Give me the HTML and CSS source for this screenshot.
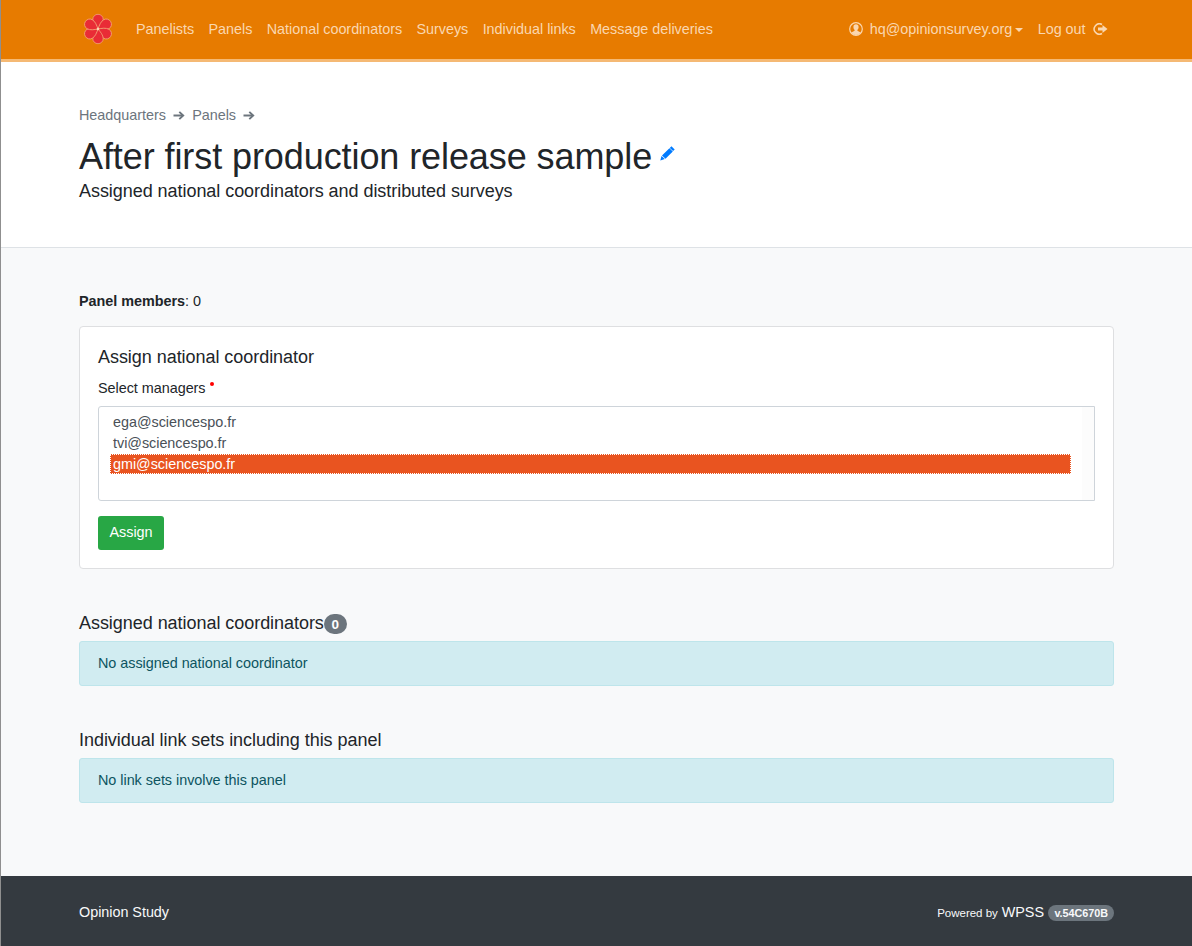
FILE: index.html
```html
<!DOCTYPE html>
<html lang="en">
<head>
<meta charset="utf-8">
<title>Opinion Study</title>
<link rel="stylesheet" href="styles.css">
</head>
<body>
<header class="topbar">
  <div class="container topbar-inner">
    <svg class="logo" width="30" height="32" viewBox="-15 -16 30 32" aria-hidden="true">
      <defs><path id="petal" d="M0 0C-2.500-3-5.200-6-5.200-9.700A5.200 5 0 0 1 5.200-9.700C5.200-6 2.500-3 0 0Z"/></defs>
      <g fill="#e92c36" stroke="#f3a477" stroke-width=".8">
        <use href="#petal"/><use href="#petal" transform="rotate(60)"/><use href="#petal" transform="rotate(120)"/><use href="#petal" transform="rotate(180)"/><use href="#petal" transform="rotate(240)"/><use href="#petal" transform="rotate(300)"/>
      </g>
      <circle r="1.300" fill="#fbd2b4"/>
    </svg>
    <nav class="nav">
      <a>Panelists</a><a>Panels</a><a>National coordinators</a><a>Surveys</a><a>Individual links</a><a>Message deliveries</a>
    </nav>
    <nav class="nav nav-user">
      <a class="user"><svg width="14" height="14" viewBox="0 0 14 14" aria-hidden="true"><circle cx="7" cy="7" r="6.300" fill="none" stroke="currentColor" stroke-width="1.200"/><path fill="currentColor" d="M7 2.300c1.700 0 2.600 1.100 2.600 2.700 0 1.200-.5 2.200-1.200 2.900v.9l3.300 1.600A5.800 5.800 0 0 1 7 13a5.800 5.800 0 0 1-4.700-2.600l3.300-1.600v-.9C4.900 7.200 4.400 6.200 4.400 5c0-1.600.9-2.700 2.600-2.700z"/></svg><span>hq@opinionsurvey.org</span><i class="caret"></i></a>
      <a class="logout"><span>Log out</span><svg width="15" height="12" viewBox="0 0 15 12" aria-hidden="true"><path d="M9 1.500A5.200 5.200 0 1 0 9 10.500" fill="none" stroke="currentColor" stroke-width="1.500"/><path fill="currentColor" d="M5 4.500h4.500V2L14.500 6l-5 4V7.500H5z"/></svg></a>
    </nav>
  </div>
</header>

<section class="hero">
  <div class="container">
    <div class="crumbs">
      <a>Headquarters</a><svg class="arrow" width="12" height="9" viewBox="0 0 12 9"><path d="M.5 4.500h9" fill="none" stroke="currentColor" stroke-width="2"/><path d="M6.300.9l3.900 3.600-3.900 3.600" fill="none" stroke="currentColor" stroke-width="1.900"/></svg><a>Panels</a><svg class="arrow" width="12" height="9" viewBox="0 0 12 9"><path d="M.5 4.500h9" fill="none" stroke="currentColor" stroke-width="2"/><path d="M6.300.9l3.900 3.600-3.900 3.600" fill="none" stroke="currentColor" stroke-width="1.900"/></svg>
    </div>
    <h1>After first production release sample<svg class="pencil" width="15" height="15" viewBox="0 0 15 15" aria-hidden="true"><path fill="#007bff" d="M11.400.3 14.700 3.400 13.100 5 9.800 1.900zM9.400 2.200l3.400 3.200-7.300 7.300-3.500-3.300zM1.500 10l3.300 3.100L.3 14.500z"/></svg></h1>
    <p class="subtitle">Assigned national coordinators and distributed surveys</p>
  </div>
</section>

<main class="main">
  <div class="container">
    <p class="members"><b>Panel members</b>: 0</p>
    <div class="card">
      <h5>Assign national coordinator</h5>
      <div class="label">Select managers <i class="required"></i></div>
      <div class="listbox">
        <div class="options">
          <div class="option">ega@sciencespo.fr</div>
          <div class="option">tvi@sciencespo.fr</div>
          <div class="option selected">gmi@sciencespo.fr</div>
        </div>
        <div class="track"></div>
      </div>
      <button class="btn">Assign</button>
    </div>
    <section class="block">
      <h5>Assigned national coordinators<span class="badge">0</span></h5>
      <div class="alert">No assigned national coordinator</div>
    </section>
    <section class="block">
      <h5>Individual link sets including this panel</h5>
      <div class="alert">No link sets involve this panel</div>
    </section>
  </div>
</main>

<footer class="footer">
  <div class="container footer-inner">
    <span>Opinion Study</span>
    <span class="powered"><small>Powered by</small> WPSS <span class="version">v.54C670B</span></span>
  </div>
</footer>
</body>
</html>
```

FILE: styles.css
```css
* { box-sizing: border-box; }
html { font-size: 14.4px; }
body {
  margin: 0;
  height: 946px;
  display: flex;
  flex-direction: column;
  border-left: 1px solid #8f8f8f;
  font-family: "Liberation Sans", Arial, sans-serif;
  font-size: 14.4px;
  line-height: 21.6px;
  letter-spacing: -.03px;
  color: #212529;
  background: #f8f9fa;
  overflow: hidden;
}
h1, h5, p { margin: 0; font-weight: 400; }
svg { flex: none; }
.container { width: 1035px; margin-left: 78px; }

.topbar { height: 62px; background: #e77b00; border-bottom: 3px solid #f5b974; }
.topbar-inner { display: flex; align-items: center; height: 59px; padding-left: 4px; padding-right: 6px; }
.logo { margin: -1px 23px 0 0; }
.nav { display: flex; gap: 14.4px; color: #fad7b0; white-space: nowrap; }
.nav-user { margin-left: auto; }
.user, .logout { display: flex; align-items: center; }
.user svg { margin-top: -1px; }
.user span { margin-left: 7px; }
.logout svg { margin: -2px 0 0 7.500px; }
.caret {
  margin: 1px 0 0 3px;
  border: 4px solid transparent;
  border-top-color: currentColor;
  border-bottom: 0;
}

.hero { height: 186px; padding-top: 43px; background: #fff; border-bottom: 1px solid #dee2e6; }
.crumbs { display: flex; align-items: center; height: 22px; color: #6c757d; }
.arrow { margin: -1px 7px 0 7.300px; }
.hero h1 { margin-top: 8px; font-size: 36px; line-height: 43px; letter-spacing: -.085px; }
.pencil { margin-left: 8px; vertical-align: 8px; }
.subtitle { margin-top: 2px; font-size: 18px; line-height: 22px; letter-spacing: -.05px; }

.main { height: 628px; padding-top: 43px; }
.members { height: 22px; }
h5 { font-size: 18px; line-height: 22px; letter-spacing: -.045px; }
.card {
  height: 243px;
  margin-top: 13px;
  padding: 19px 18px;
  background: #fff;
  border: 1px solid #dedfe1;
  border-radius: 4px;
}
.label { display: flex; height: 22px; margin: 9px 0 7px; line-height: 22px; }
.required { width: 4px; height: 4px; margin: 5px 0 0 4px; border-radius: 50%; background: #f00; }
.listbox {
  display: flex;
  height: 95px;
  background: #fff;
  border: 1px solid #ced4da;
  border-radius: 3px 0 0 3px;
  color: #495057;
}
.options { flex: 1; padding: 5px 11px; }
.option { height: 21px; padding-left: 3px; line-height: 21px; }
.option.selected {
  height: 20px;
  padding-left: 2px;
  line-height: 18px;
  border: 1px dotted #fff;
  background: #e95420;
  color: #fff;
}
.track { width: 12px; background: #fcfcfc; }
.btn {
  display: block;
  width: 66px;
  height: 34px;
  margin-top: 15px;
  padding: 0;
  border: 0;
  border-radius: 3px;
  background: #28a745;
  color: #fff;
  font: inherit;
}
.block { margin-top: 43px; }
.block h5 { display: flex; align-items: center; }
.badge {
  width: 23px;
  height: 20px;
  margin-top: 2px;
  border-radius: 10px;
  background: #6c757d;
  color: #fff;
  font-size: 13.5px;
  font-weight: 700;
  line-height: 21px;
  text-align: center;
}
.alert {
  height: 45px;
  margin-top: 7px;
  padding: 11px 18px;
  border: 1px solid #bee5eb;
  border-radius: 3px;
  background: #d1ecf1;
  color: #0c5460;
}

.footer { height: 70px; padding-top: 26px; background: #343a40; color: #f8f9fa; }
.footer-inner { display: flex; justify-content: space-between; }
.powered small { font-size: 11.52px; }
.version {
  display: inline-block;
  height: 16px;
  margin-left: .5px;
  padding: 0 6px;
  border-radius: 8px;
  background: #6c757d;
  font-size: 10.8px;
  font-weight: 700;
  line-height: 17px;
}
```
